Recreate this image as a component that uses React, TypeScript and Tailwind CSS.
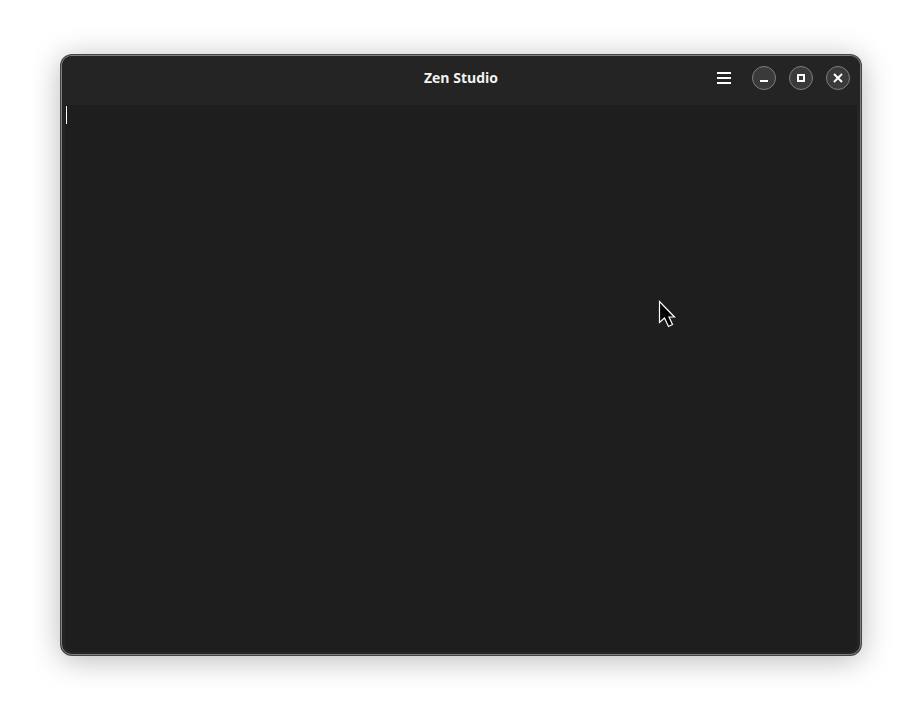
export default function App() {
  return (
    <div className="w-[922px] h-[722px] bg-white pt-[54px] pl-[60px] overflow-hidden relative font-['Open_Sans',sans-serif]">
      <div className="w-[802px] h-[602px] rounded-[12px] bg-[#444444] p-px flex shadow-[0_4px_30px_rgba(0,0,0,0.28)]">
        <div className="flex-1 rounded-[11px] border border-[#808080] bg-[#242424] flex flex-col overflow-hidden">
          <header className="h-[49px] pb-[6px] shrink-0 relative flex items-center justify-end bg-[#242424] pr-[10px]">
            <span className="absolute left-0 right-0 text-center text-[14px] font-bold text-[#f2f2f2] leading-none">Zen Studio</span>
            <svg width="14" height="12" viewBox="0 0 14 12" className="mr-[21px]">
              <path d="M0 0h14v2H0zM0 5h14v2H0zM0 10h14v2H0z" fill="#fff" />
            </svg>
            <button className="w-6 h-6 rounded-full bg-[#3a3a3a] border border-[#7f7f7f] flex items-center justify-center mr-[13px]">
              <svg width="8" height="8" viewBox="0 0 8 8"><path d="M0 6h8v2H0z" fill="#fff" /></svg>
            </button>
            <button className="w-6 h-6 rounded-full bg-[#3a3a3a] border border-[#7f7f7f] flex items-center justify-center mr-[13px]">
              <svg width="8" height="8" viewBox="0 0 8 8"><path d="M0 0h8v8H0zM2 2v4h4V2z" fill="#fff" fillRule="evenodd" /></svg>
            </button>
            <button className="w-6 h-6 rounded-full bg-[#3a3a3a] border border-[#7f7f7f] flex items-center justify-center">
              <svg width="10" height="10" viewBox="0 0 10 10"><path d="M1 1l8 8M9 1l-8 8" stroke="#fff" strokeWidth="2" /></svg>
            </button>
          </header>
          <main className="flex-1 bg-[#1e1e1e] mx-[3px] mb-[2px] rounded-b-[8px] pl-[1px] pt-[1px]">
            <div className="w-px h-[18px] bg-white" />
          </main>
        </div>
      </div>
      <svg width="18" height="28" viewBox="0 0 18 28" className="absolute left-[658px] top-[300px]">
        <path d="M1.5 1.5V22.5L6.5 18L10.5 26.5L14.5 24.5L11 17H16.5Z" fill="#000" stroke="#fff" strokeWidth="1.2" />
      </svg>
    </div>
  );
}
